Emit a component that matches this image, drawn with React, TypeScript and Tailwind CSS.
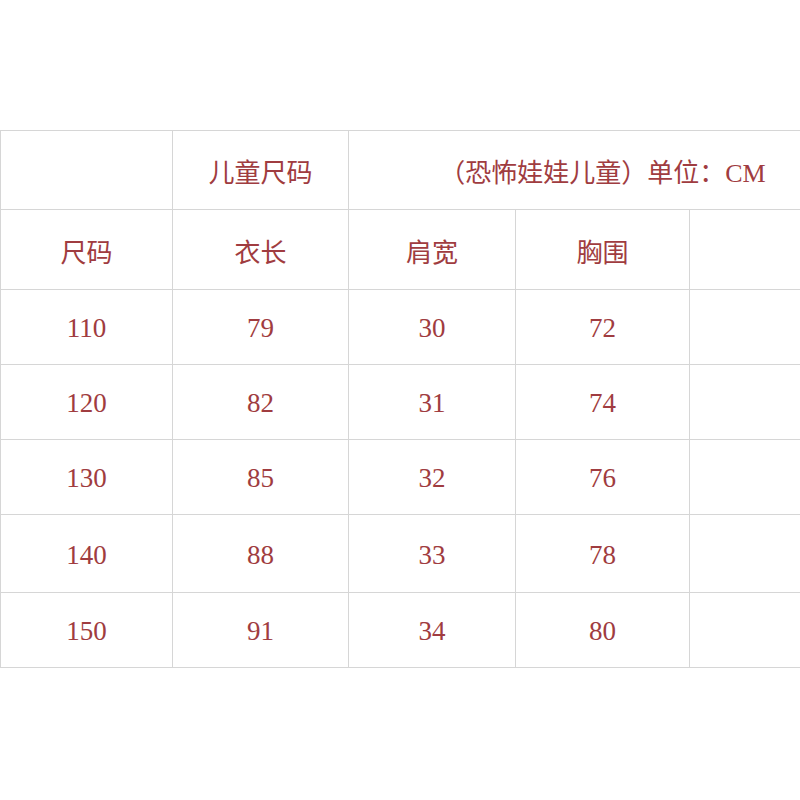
const rows = [
  { size: "110", length: "79", shoulder: "30", chest: "72", h: "h-[75px]" },
  { size: "120", length: "82", shoulder: "31", chest: "74", h: "h-[75px]" },
  { size: "130", length: "85", shoulder: "32", chest: "76", h: "h-[75px]" },
  { size: "140", length: "88", shoulder: "33", chest: "78", h: "h-[78px]" },
  { size: "150", length: "91", shoulder: "34", chest: "80", h: "h-[75px]" },
];

const cell = "border border-[#d6d6d6] text-center align-middle p-0";

export default function App() {
  return (
    <div className="w-[800px] h-[800px] overflow-hidden bg-white pt-[130px] font-['Liberation_Serif','Noto_Sans_CJK_SC',serif] text-[#a03c40]">
      <table className="table-fixed border-collapse w-[866px] text-[27px]">
        <colgroup>
          <col className="w-[172px]" />
          <col className="w-[176px]" />
          <col className="w-[167px]" />
          <col className="w-[174px]" />
          <col className="w-[177px]" />
        </colgroup>
        <tbody>
          <tr className="h-[79px]">
            <td className={cell}></td>
            <td className={cell + " pt-[7px] text-[26px]"}>儿童尺码</td>
            <td className={cell + " pt-[7px] pr-[10px] text-[26px]"} colSpan={3}>
              （恐怖娃娃儿童）单位：CM
            </td>
          </tr>
          <tr className="h-[80px]">
            <td className={cell + " pt-[8px] text-[26px]"}>尺码</td>
            <td className={cell + " pt-[8px] text-[26px]"}>衣长</td>
            <td className={cell + " pt-[8px] text-[26px]"}>肩宽</td>
            <td className={cell + " pt-[8px] text-[26px]"}>胸围</td>
            <td className={cell}></td>
          </tr>
          {rows.map((r) => (
            <tr key={r.size} className={r.h}>
              <td className={cell + " pt-[3px]"}>{r.size}</td>
              <td className={cell + " pt-[3px]"}>{r.length}</td>
              <td className={cell + " pt-[3px]"}>{r.shoulder}</td>
              <td className={cell + " pt-[3px]"}>{r.chest}</td>
              <td className={cell}></td>
            </tr>
          ))}
        </tbody>
      </table>
    </div>
  );
}
